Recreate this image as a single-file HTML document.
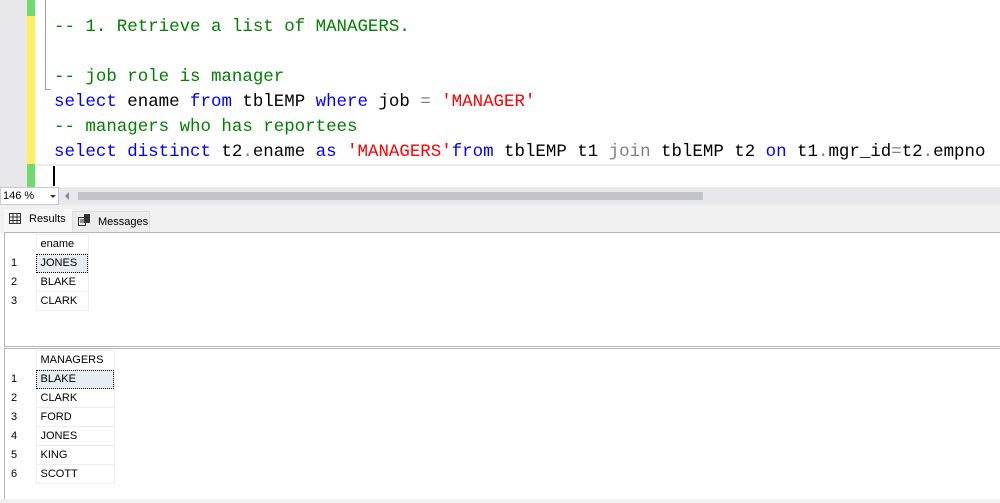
<!DOCTYPE html>
<html><head><meta charset="utf-8"><style>
*{margin:0;padding:0;box-sizing:border-box}
body{width:1000px;height:503px;overflow:hidden;background:#fff;position:relative;font-family:"Liberation Sans",sans-serif}
.a{position:absolute}
.code{font-family:"Liberation Mono",monospace;font-size:17.45px;white-space:pre;line-height:25px;left:54px}
.c{color:#008000}.k{color:#0000ff}.s{color:#ff0000}.g{color:#808080}.t{color:#000}
table{border-collapse:collapse;font-size:11px;position:absolute}
td{height:19px;border:1px solid #eee;padding:0 0 0 4px;color:#000}
td.n{border:none;width:31px;padding-left:6px}
</style></head><body>
<div class="a" style="left:0;top:0;width:27px;height:187px;background:#e8e8ec"></div>
<div class="a" style="left:27px;top:0;width:8px;height:187px;background:#6ddc6d"></div>
<div class="a" style="left:27px;top:16px;width:8px;height:148px;background:#ffee62"></div>
<div class="a" style="left:45px;top:0;width:1px;height:89px;background:#a0a0a0"></div>
<div class="a" style="left:45px;top:89px;width:6px;height:1px;background:#a0a0a0"></div>
<div class="a" style="left:53px;top:164px;width:2px;height:22px;background:#000"></div>
<div class="a" style="left:36px;top:164px;width:964px;height:2px;background:#eaeaf0"></div>
<div class="a code" style="top:15px"><span class="c">-- 1. Retrieve a list of MANAGERS.</span>

<span class="c">-- job role is manager</span>
<span class="k">select</span> ename <span class="k">from</span> tblEMP <span class="k">where</span> job <span class="g">=</span> <span class="s">'MANAGER'</span>
<span class="c">-- managers who has reportees</span>
<span class="k">select distinct</span> t2<span class="g">.</span>ename <span class="k">as</span> <span class="s">'MANAGERS'</span><span class="k">from</span> tblEMP t1 <span class="g">join</span> tblEMP t2 <span class="k">on</span> t1<span class="g">.</span>mgr_id<span class="g">=</span>t2<span class="g">.</span>empno</div>
<div class="a" style="left:0;top:187px;width:1000px;height:18px;background:#e8e8ec"></div>
<div class="a" style="left:0;top:187px;width:59px;height:18px;background:#fff;border:1px solid #c8c8d8;font-size:11px;padding:2px 0 0 2px">146 %</div>
<div class="a" style="left:50px;top:195px;border-left:3px solid transparent;border-right:3px solid transparent;border-top:3px solid #333"></div>
<div class="a" style="left:65px;top:192px;border-top:4px solid transparent;border-bottom:4px solid transparent;border-right:4px solid #888"></div>
<div class="a" style="left:78px;top:192px;width:625px;height:8px;background:#c2c3c9"></div>
<div class="a" style="left:0;top:205px;width:1000px;height:28px;background:#f0f0f0"></div>
<div class="a" style="left:4px;top:209px;width:68px;height:24px;background:#f7f7f7;font-size:11px;padding:4px 0 0 25px">Results</div>
<svg class="a" style="left:9px;top:213px" width="12" height="11"><rect x=".5" y=".5" width="11" height="10" fill="none" stroke="#333"/><path d="M0 4h12M0 7.5h12M4 0v11M8 0v11" stroke="#333"/></svg>
<div class="a" style="left:72px;top:211px;width:78px;height:22px;background:#ececec;border:1px solid #ddd;font-size:11px;padding:4px 0 0 25px">Messages</div>
<svg class="a" style="left:77px;top:213px" width="14" height="14"><rect x="1.5" y="4.5" width="7" height="8" fill="none" stroke="#333"/><rect x="7" y="1" width="6" height="9" fill="#333"/><path d="M3 7h4M3 9h4" stroke="#333"/></svg>
<div class="a" style="left:4px;top:232px;width:996px;height:115px;border:1px solid #b4b4bb;border-right:none;background:#fff"></div>
<div class="a" style="left:4px;top:348px;width:996px;height:152px;border:1px solid #b4b4bb;border-right:none;border-bottom:none;background:#fff"></div>
<div class="a" style="left:0;top:499px;width:1000px;height:4px;background:#f0f0f0"></div>
<table style="left:5px;top:234px">
<tr><td class="n" style="border-right:1px solid #eee"></td><td style="width:52px;height:18px">ename</td></tr>
<tr><td class="n">1</td><td style="background:#e6ecf0;outline:1px dotted #000;outline-offset:-1px">JONES</td></tr>
<tr><td class="n">2</td><td>BLAKE</td></tr>
<tr><td class="n">3</td><td>CLARK</td></tr>
</table>
<table style="left:5px;top:350px">
<tr><td class="n" style="border-right:1px solid #eee"></td><td style="width:78px;height:18px">MANAGERS</td></tr>
<tr><td class="n">1</td><td style="background:#e6ecf0;outline:1px dotted #000;outline-offset:-1px">BLAKE</td></tr>
<tr><td class="n">2</td><td>CLARK</td></tr>
<tr><td class="n">3</td><td>FORD</td></tr>
<tr><td class="n">4</td><td>JONES</td></tr>
<tr><td class="n">5</td><td>KING</td></tr>
<tr><td class="n">6</td><td>SCOTT</td></tr>
</table>
</body></html>
